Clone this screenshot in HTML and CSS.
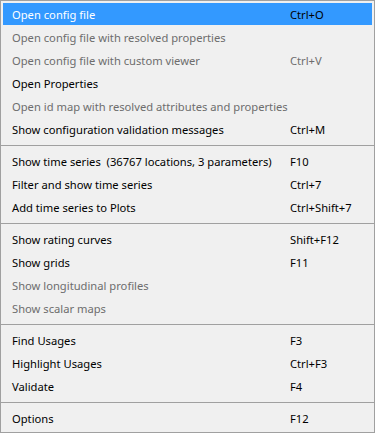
FILE: index.html
```html
<!DOCTYPE html>
<html lang="en">
<head>
    <meta charset="UTF-8">
    <meta name="viewport" content="width=device-width, initial-scale=1.0">
    <title>Context menu</title>
    <link rel="stylesheet" href="styles.css">
</head>
<body>
    <ul class="menu">
        <li class="item selected"><span class="label">Open config file</span><span class="shortcut">Ctrl+O</span></li>
        <li class="item disabled"><span class="label">Open config file with resolved properties</span><span class="shortcut"></span></li>
        <li class="item disabled"><span class="label">Open config file with custom viewer</span><span class="shortcut">Ctrl+V</span></li>
        <li class="item"><span class="label">Open Properties</span><span class="shortcut"></span></li>
        <li class="item disabled"><span class="label">Open id map with resolved attributes and properties</span><span class="shortcut"></span></li>
        <li class="item"><span class="label">Show configuration validation messages</span><span class="shortcut">Ctrl+M</span></li>
        <li class="separator"></li>
        <li class="item"><span class="label">Show time series  (36767 locations, 3 parameters)</span><span class="shortcut">F10</span></li>
        <li class="item"><span class="label">Filter and show time series</span><span class="shortcut">Ctrl+7</span></li>
        <li class="item"><span class="label">Add time series to Plots</span><span class="shortcut">Ctrl+Shift+7</span></li>
        <li class="separator"></li>
        <li class="item"><span class="label">Show rating curves</span><span class="shortcut">Shift+F12</span></li>
        <li class="item"><span class="label">Show grids</span><span class="shortcut">F11</span></li>
        <li class="item disabled"><span class="label">Show longitudinal profiles</span><span class="shortcut"></span></li>
        <li class="item disabled"><span class="label">Show scalar maps</span><span class="shortcut"></span></li>
        <li class="separator"></li>
        <li class="item"><span class="label">Find Usages</span><span class="shortcut">F3</span></li>
        <li class="item"><span class="label">Highlight Usages</span><span class="shortcut">Ctrl+F3</span></li>
        <li class="item"><span class="label">Validate</span><span class="shortcut">F4</span></li>
        <li class="separator"></li>
        <li class="item"><span class="label">Options</span><span class="shortcut">F12</span></li>
    </ul>
</body>
</html>
```

FILE: styles.css
```css
body {
    margin: 0;
    background: #ffffff;
    font-family: "Noto Sans", "Open Sans", sans-serif;
    font-size: 11.2px;
}
.menu {
    list-style: none;
    margin: 0;
    padding: 2px 2px 2px 1px;
    width: 375px;
    height: 433px;
    box-sizing: border-box;
    background: #f0f0f0;
    border: 1px solid #a0a0a0;
    display: flex;
    flex-direction: column;
}
.item {
    display: grid;
    grid-template-columns: 278px 1fr;
    align-items: center;
    height: 23px;
    padding-left: 9px;
    margin-left: 1px;
    color: #000000;
    white-space: pre;
}
.label {
    min-width: 0;
}
.item.disabled {
    color: #6d6d6d;
}
.item.selected {
    background: #3399ff;
    height: 22px;
    margin-bottom: 1px;
}
.item.selected .label {
    color: #ffffff;
}
.separator {
    height: 1px;
    margin: 4px -2px 4px -1px;
    background: #a0a0a0;
}
```
